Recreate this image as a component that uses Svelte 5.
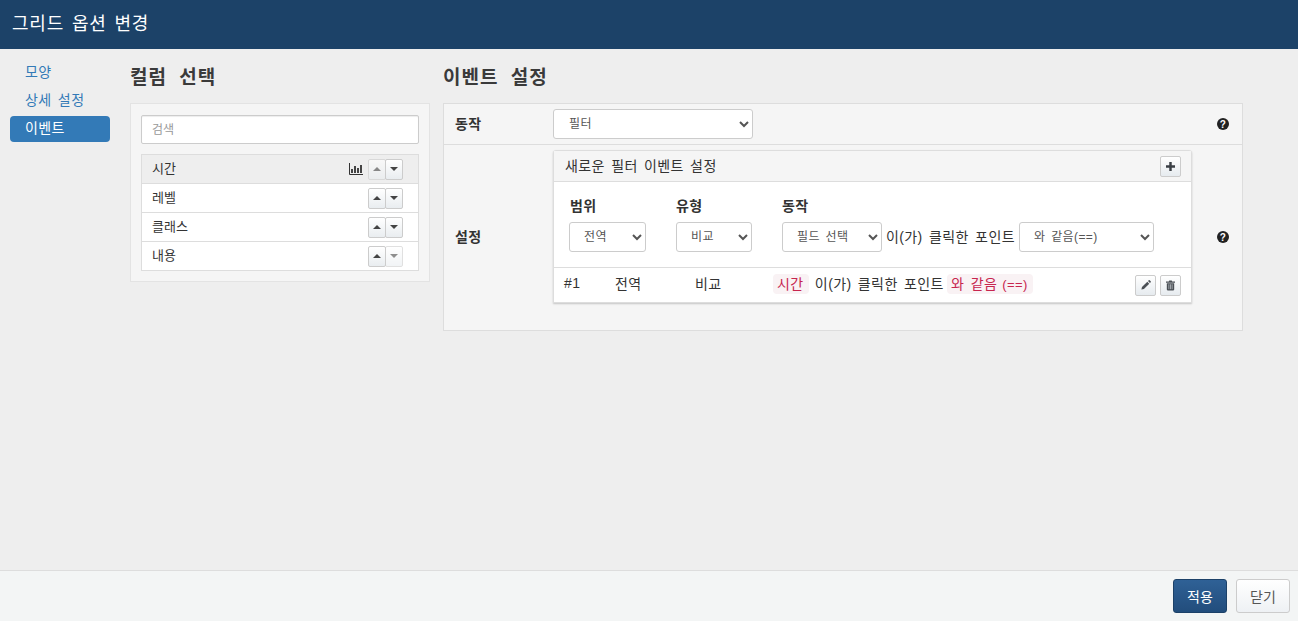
<script>
  const columns = [
    { name: '시간', active: true, upOff: true, downOff: false },
    { name: '레벨', active: false, upOff: false, downOff: false },
    { name: '클래스', active: false, upOff: false, downOff: false },
    { name: '내용', active: false, upOff: false, downOff: true }
  ];
</script>

<div class="modal">
  <header class="head">그리드 옵션 변경</header>

  <main class="body">
    <nav class="side">
      <a href="#a">모양</a>
      <a href="#b">상세 설정</a>
      <a href="#c" class="on">이벤트</a>
    </nav>

    <section class="cols">
      <h3>컬럼 선택</h3>
      <div class="well">
        <input class="search" placeholder="검색" />
        <ul class="list">
          {#each columns as c}
            <li class:active={c.active}>
              <span class="name">{c.name}</span>
              {#if c.active}
                <svg class="chart" width="14" height="12" viewBox="0 0 14 12">
                  <path d="M0.5 0v11.5H14" fill="none" stroke="#333" />
                  <rect x="2" y="6" width="2" height="4" fill="#444" />
                  <rect x="5" y="3" width="2" height="7" fill="#444" />
                  <rect x="8" y="5" width="2" height="5" fill="#444" />
                  <rect x="11" y="2" width="2" height="8" fill="#444" />
                </svg>
              {/if}
              <span class="updown">
                <button class="arrow" class:off={c.upOff} aria-label="up"><i class="tri up"></i></button>
                <button class="arrow" class:off={c.downOff} aria-label="down"><i class="tri down"></i></button>
              </span>
            </li>
          {/each}
        </ul>
      </div>
    </section>

    <section class="events">
      <h3>이벤트 설정</h3>
      <div class="table">
        <div class="row first">
          <span class="lbl">동작</span>
          <div class="val"><select class="sel action"><option>필터</option></select></div>
          <span class="help">
            <svg width="12" height="12" viewBox="0 0 12 12"><circle cx="6" cy="6" r="6" fill="#222" /><text x="6" y="9.6" text-anchor="middle" class="q">?</text></svg>
          </span>
        </div>
        <div class="row second">
          <span class="lbl">설정</span>
          <div class="val">
            <div class="card">
              <div class="card-head">
                <span>새로운 필터 이벤트 설정</span>
                <button class="tool" aria-label="add">
                  <svg width="9" height="9" viewBox="0 0 11 11"><path d="M4 0h3v4h4v3H7v4H4V7H0V4h4z" fill="#3a3f45" /></svg>
                </button>
              </div>
              <div class="form">
                <div class="fld w-scope">
                  <b>범위</b>
                  <select class="sel"><option>전역</option></select>
                </div>
                <div class="fld w-type">
                  <b>유형</b>
                  <select class="sel"><option>비교</option></select>
                </div>
                <div class="fld">
                  <b>동작</b>
                  <div class="inline">
                    <select class="sel field"><option>필드 선택</option></select>
                    <span>이(가) 클릭한 포인트</span>
                    <select class="sel op"><option>와 같음(==)</option></select>
                  </div>
                </div>
              </div>
              <div class="rule">
                <span class="no">#1</span>
                <span class="scope">전역</span>
                <span class="kind">비교</span>
                <span class="desc"><code>시간</code> 이(가) 클릭한 포인트 <code class="cond">와 같음<small>(==)</small></code></span>
                <button class="tool" aria-label="edit">
                  <svg width="10" height="10" viewBox="0 0 12 12"><path d="M0.5 11.5l.7-3 6.4-6.4 2.3 2.3-6.4 6.4z" fill="#4a4f55" /><path d="M8.4 1.3l.9-.9a.8.8 0 0 1 1.1 0l1.2 1.2a.8.8 0 0 1 0 1.1l-.9.9z" fill="#4a4f55" /></svg>
                </button>
                <button class="tool" aria-label="delete">
                  <svg width="9" height="11" viewBox="0 0 11 12"><path d="M4 0h3l.6 1.2H11v1.3H0V1.200h3.400z" fill="#4a4f55" /><path d="M1 3.200h9V11a1 1 0 0 1-1 1H2a1 1 0 0 1-1-1z" fill="#4a4f55" /><path d="M3.500 4.500v6M5.500 4.500v6M7.500 4.500v6" stroke="#cfd6dc" stroke-width=".8" /></svg>
                </button>
              </div>
            </div>
          </div>
          <span class="help">
            <svg width="12" height="12" viewBox="0 0 12 12"><circle cx="6" cy="6" r="6" fill="#222" /><text x="6" y="9.6" text-anchor="middle" class="q">?</text></svg>
          </span>
        </div>
      </div>
    </section>
  </main>

  <footer class="foot">
    <button class="btn primary">적용</button>
    <button class="btn">닫기</button>
  </footer>
</div>

<style>
  :global(body) {
    margin: 0;
    font-family: "Liberation Sans", "Noto Sans CJK KR", sans-serif;
    font-size: 14px;
    letter-spacing: .4px;
    word-spacing: 2px;
    color: #333;
  }
  .modal {
    height: 621px;
    display: flex;
    flex-direction: column;
    background: #eee;
    overflow: hidden;
  }
  .head {
    height: 49px;
    box-sizing: border-box;
    padding: 11px 12px;
    background: #1c4268;
    color: #fff;
    font-size: 18px;
    letter-spacing: .8px;
    line-height: 26px;
  }
  .body {
    flex: 1;
    display: flex;
    align-items: flex-start;
    padding-top: 10px;
  }
  .side {
    width: 100px;
    margin: 1px 0 0 10px;
    display: flex;
    flex-direction: column;
    gap: 2px;
  }
  .side a {
    height: 26px;
    line-height: 25px;
    padding-left: 15px;
    color: #337ab7;
    text-decoration: none;
    border-radius: 4px;
  }
  .side a.on {
    background: #337ab7;
    color: #fff;
  }
  h3 {
    margin: 0;
    height: 44px;
    font-size: 19px;
    letter-spacing: 1px;
    word-spacing: 6px;
    line-height: 38px;
    font-weight: 700;
    color: #3a3a3a;
  }
  .cols {
    width: 300px;
    margin-left: 20px;
  }
  .well {
    box-sizing: border-box;
    height: 179px;
    padding: 11px 10px 10px;
    background: #f5f5f5;
    border: 1px solid #e3e3e3;
  }
  .search {
    display: block;
    box-sizing: border-box;
    width: 100%;
    height: 29px;
    padding: 0 10px;
    border: 1px solid #ccc;
    border-radius: 2px;
    font: inherit;
    font-size: 12px;
    box-shadow: inset 0 1px 1px rgba(0, 0, 0, .075);
  }
  .search::placeholder {
    color: #999;
  }
  .list {
    list-style: none;
    margin: 10px 0 0;
    padding: 0;
    background: #fff;
    border: 1px solid #ddd;
    border-bottom: 0;
  }
  .list li {
    display: flex;
    align-items: center;
    height: 28px;
    padding: 0 15px 0 10px;
    border-bottom: 1px solid #ddd;
    font-size: 13px;
    letter-spacing: 0;
  }
  .list li.active {
    background: #eee;
  }
  .name {
    flex: 1;
    padding-bottom: 4px;
  }
  .chart {
    margin-right: 5px;
  }
  .updown {
    display: flex;
  }
  .arrow {
    box-sizing: border-box;
    width: 18px;
    height: 21px;
    padding: 0;
    display: grid;
    place-items: center;
    border: 1px solid #ccc;
    border-radius: 2px;
    background: linear-gradient(#fff, #e9edf0);
  }
  .arrow + .arrow {
    margin-left: -1px;
  }
  .arrow.off {
    opacity: .6;
  }
  .tri {
    width: 0;
    height: 0;
    border-left: 4px solid transparent;
    border-right: 4px solid transparent;
  }
  .tri.up {
    border-bottom: 4px solid #444;
  }
  .tri.down {
    border-top: 4px solid #444;
  }
  .events {
    width: 800px;
    margin-left: 13px;
  }
  .table {
    background: #f5f5f5;
    border: 1px solid #ddd;
  }
  .row {
    display: flex;
    align-items: center;
  }
  .row.first {
    height: 40px;
    border-bottom: 1px solid #ddd;
  }
  .row.second {
    height: 185px;
    align-items: flex-start;
  }
  .lbl {
    width: 109px;
    padding: 0 0 3px 11px;
    box-sizing: border-box;
    font-weight: 700;
    color: #333;
  }
  .second .lbl {
    margin-top: 81px;
  }
  .val {
    flex: 1;
  }
  .second .val {
    padding-top: 5px;
  }
  .help {
    display: flex;
    margin-right: 13px;
  }
  .second .help {
    margin-top: 86px;
  }
  .q {
    font-family: "Liberation Sans", sans-serif;
    font-size: 10px;
    font-weight: 700;
    fill: #fff;
  }
  .sel {
    box-sizing: border-box;
    height: 30px;
    padding: 0 10px;
    background: #fff;
    border: 1px solid #ccc;
    border-radius: 3px;
    font: inherit;
    font-size: 12px;
    letter-spacing: .4px;
    word-spacing: 2px;
    color: #555;
  }
  .action {
    width: 200px;
    padding-left: 11px;
  }
  .card {
    width: 639px;
    box-sizing: border-box;
    background: #fff;
    border: 1px solid #ddd;
    border-radius: 3px 3px 0 0;
    box-shadow: 0 1px 2px rgba(0, 0, 0, .2);
  }
  .card-head {
    display: flex;
    align-items: center;
    justify-content: space-between;
    height: 30px;
    padding: 0 10px 0 11px;
    background: #f5f5f5;
    border-bottom: 1px solid #ddd;
  }
  .card-head span {
    padding-bottom: 3px;
  }
  .tool {
    box-sizing: border-box;
    width: 21px;
    height: 21px;
    padding: 0;
    display: grid;
    place-items: center;
    border: 1px solid #ccc;
    border-radius: 2px;
    background: linear-gradient(#fff, #e6ebef);
  }
  .form {
    display: flex;
    height: 86px;
    box-sizing: border-box;
    padding: 15px 0 0 15px;
    border-bottom: 1px solid #ddd;
  }
  .fld b {
    display: block;
    height: 25px;
    line-height: 18px;
    color: #333;
  }
  .w-scope {
    width: 107px;
  }
  .w-scope b {
    padding-left: 1px;
  }
  .w-scope .sel {
    width: 77px;
  }
  .w-type {
    width: 106px;
  }
  .w-type .sel {
    width: 76px;
  }
  .inline {
    display: flex;
    align-items: center;
    gap: 4px;
    white-space: nowrap;
  }
  .inline span {
    padding-bottom: 3px;
  }
  .field {
    width: 100px;
  }
  .op {
    width: 135px;
  }
  .rule {
    display: flex;
    align-items: center;
    height: 34px;
    padding: 0 10px 0 10px;
  }
  .no {
    width: 51px;
    padding-bottom: 5px;
  }
  .scope {
    width: 80px;
    padding-bottom: 5px;
  }
  .kind {
    width: 78px;
    padding-bottom: 5px;
  }
  .desc {
    flex: 1;
    white-space: nowrap;
    padding-bottom: 5px;
  }
  code {
    font-family: inherit;
    font-size: 14px;
    padding: 2px 5px 2px 4px;
    color: #c7254e;
    background: #f9f2f4;
    border-radius: 4px;
  }
  .cond {
    margin-left: -3px;
  }
  code small {
    font-size: 13px;
    margin-left: 5px;
  }
  .rule .tool + .tool {
    margin-left: 4px;
  }
  .foot {
    height: 51px;
    box-sizing: border-box;
    display: flex;
    justify-content: flex-end;
    align-items: center;
    gap: 9px;
    padding: 0 8px 0 0;
    background: #f3f5f5;
    border-top: 1px solid #ddd;
  }
  .btn {
    box-sizing: border-box;
    width: 54px;
    height: 34px;
    font: inherit;
    color: #555;
    background: linear-gradient(#fff, #eef1f4);
    border: 1px solid #ccc;
    border-radius: 3px;
  }
  .btn.primary {
    color: #fff;
    background: linear-gradient(#2f6196, #224d7c);
    border-color: #1c4168;
  }
</style>
